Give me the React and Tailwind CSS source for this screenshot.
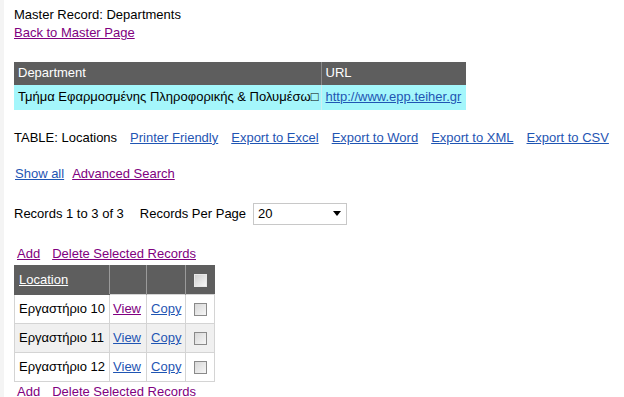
import React from 'react'

const font = { fontFamily: '"Liberation Sans", Arial, sans-serif' }

function Box({ dark }) {
    return (
        <span className={`inline-block h-[13px] w-[13px] border ${dark ? 'border-[#e8e8e8] bg-gradient-to-br from-[#cfcfcf] to-[#f8f8f8]' : 'border-[#8a8a8a] bg-gradient-to-br from-[#d8d8d8] to-[#f6f6f6]'} align-middle`} />
    )
}

const rows = [
    { name: 'Εργαστήριο 10', viewed: true, bg: 'bg-white' },
    { name: 'Εργαστήριο 11', viewed: false, bg: 'bg-[#f0f0f0]' },
    { name: 'Εργαστήριο 12', viewed: false, bg: 'bg-white' },
]

export default function App() {
    return (
        <div className="flex h-[397px] w-[624px] overflow-hidden whitespace-nowrap bg-white text-[13px] text-black" style={font}>
            <div className="w-[4px] bg-[#f4f4f4]" />
            <div className="flex-1 pl-[10px]">
                <div className="pt-[6px] leading-[17px]">Master Record: Departments</div>
                <a className="leading-[17px] text-[#800080] underline">Back to Master Page</a>

                <table className="mt-[19px] w-[452px] table-fixed border-collapse">
                    <thead>
                        <tr className="h-[23px] bg-[#5e5e5e] text-left text-white">
                            <th className="w-[307px] border-r border-[#8a8a8a] px-[4px] font-normal">Department</th>
                            <th className="px-[4px] font-normal">URL</th>
                        </tr>
                    </thead>
                    <tbody>
                        <tr className="h-[25px] bg-[#a4f6fb]">
                            <td className="overflow-hidden border-r border-[#d0eef0] px-[4px]">Τμήμα Εφαρμοσμένης Πληροφορικής & Πολυμέσω□</td>
                            <td className="px-[4px]"><a className="text-[#1f55b3] underline">http://www.epp.teiher.gr</a></td>
                        </tr>
                    </tbody>
                </table>

                <div className="mt-[19px] flex gap-[13px] leading-[17px]">
                    <span>TABLE: Locations</span>
                    <a className="text-[#1f55b3] underline">Printer Friendly</a>
                    <a className="text-[#1f55b3] underline">Export to Excel</a>
                    <a className="text-[#1f55b3] underline">Export to Word</a>
                    <a className="text-[#1f55b3] underline">Export to XML</a>
                    <a className="text-[#1f55b3] underline">Export to CSV</a>
                </div>

                <div className="mt-[19px] flex gap-[8px] pl-px leading-[17px]">
                    <a className="text-[#1f55b3] underline">Show all</a>
                    <a className="text-[#800080] underline">Advanced Search</a>
                </div>

                <div className="mt-[21px] flex items-center leading-[17px]">
                    <span>Records 1 to 3 of 3</span>
                    <span className="ml-[16px]">Records Per Page</span>
                    <div className="ml-[7px] flex h-[22px] w-[94px] items-center justify-between border border-[#c8c8c8] bg-white pl-[4px] pr-[5px]">
                        <span>20</span>
                        <svg width="8" height="5" viewBox="0 0 8 5"><path d="M0 0h8L4 5z" fill="#000" /></svg>
                    </div>
                </div>

                <div className="mt-[20px] flex gap-[12px] pl-[3px] leading-[17px]">
                    <a className="text-[#800080] underline">Add</a>
                    <a className="text-[#800080] underline">Delete Selected Records</a>
                </div>

                <table className="mt-[3px] border-collapse">
                    <thead>
                        <tr className="h-[29px] bg-[#5e5e5e] text-left text-white">
                            <th className="w-[94px] border border-[#5e5e5e] border-r-[#9a9a9a] px-[4px] font-normal underline">Location</th>
                            <th className="w-[37px] border-r border-[#9a9a9a]" />
                            <th className="w-[39px] border-r border-[#9a9a9a]" />
                            <th className="w-[29px] text-center"><Box dark /></th>
                        </tr>
                    </thead>
                    <tbody>
                        {rows.map((r) => (
                            <tr key={r.name} className={`h-[29px] ${r.bg}`}>
                                <td className="border border-[#d4d4d4] px-[4px]">{r.name}</td>
                                <td className="border border-[#d4d4d4] px-[3px]">
                                    <a className={`${r.viewed ? 'text-[#800080]' : 'text-[#1f55b3]'} underline`}>View</a>
                                </td>
                                <td className="border border-[#d4d4d4] px-[4px]">
                                    <a className="text-[#1f55b3] underline">Copy</a>
                                </td>
                                <td className="border border-[#d4d4d4] text-center"><Box /></td>
                            </tr>
                        ))}
                    </tbody>
                </table>

                <div className="mt-px flex gap-[12px] pl-[3px] leading-[17px]">
                    <a className="text-[#800080] underline">Add</a>
                    <a className="text-[#800080] underline">Delete Selected Records</a>
                </div>
            </div>
        </div>
    )
}
